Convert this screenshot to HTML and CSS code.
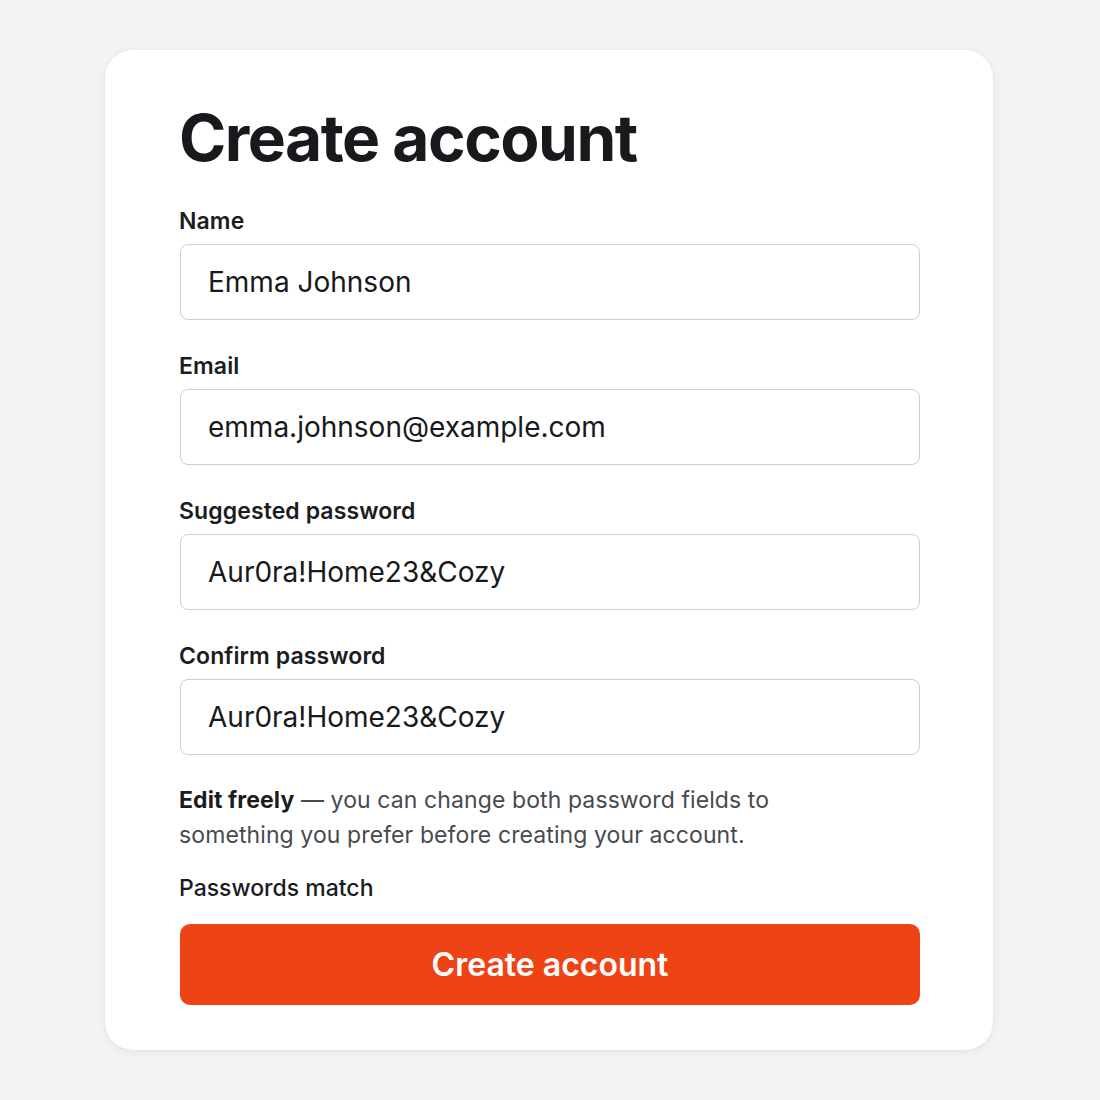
FILE: index.html
```html
<!DOCTYPE html>
<html lang="en">
<head>
<meta charset="utf-8">
<title>Create account</title>
<link rel="stylesheet" href="styles.css">
</head>
<body>
<main class="card">
  <h1 class="title">Create account</h1>
  <form class="form">
    <div class="field">
      <label class="label" for="name">Name</label>
      <div class="input" id="name">Emma Johnson</div>
    </div>
    <div class="field">
      <label class="label" for="email">Email</label>
      <div class="input" id="email">emma.johnson@example.com</div>
    </div>
    <div class="field">
      <label class="label" for="pw">Suggested password</label>
      <div class="input" id="pw">Aur0ra!Home23&amp;Cozy</div>
    </div>
    <div class="field">
      <label class="label" for="pw2">Confirm password</label>
      <div class="input" id="pw2">Aur0ra!Home23&amp;Cozy</div>
    </div>
    <p class="help"><strong>Edit freely</strong> — you can change both password fields to something you prefer before creating your account.</p>
    <p class="status">Passwords match</p>
    <button type="button" class="btn">Create account</button>
  </form>
</main>
</body>
</html>
```
FILE: styles.css
```css
* { box-sizing: border-box; }
html, body { margin: 0; padding: 0; }
body {
  background: #f3f3f3;
  font-family: Inter, "Noto Sans", sans-serif;
  color: #1a1c1f;
  height: 1100px;
}
.card {
  width: 888px;
  height: 1000px;
  margin: 50px 0 0 105px;
  background: #fff;
  border-radius: 28px;
  box-shadow: 0 2px 10px rgba(0,0,0,0.06), 0 0 2px rgba(0,0,0,0.05);
  padding: 50px 73px 45px 75px;
}
.title {
  margin: 0 0 0 -1px;
  font-size: 64px;
  line-height: 76px;
  font-weight: 700;
  letter-spacing: -1.5px;
  color: #17191c;
}
.form {
  margin-top: 32px;
  display: flex;
  flex-direction: column;
}
.field {
  display: flex;
  flex-direction: column;
  gap: 10px;
  margin-bottom: 33px;
}
.field:nth-child(4) { margin-bottom: 28px; }
.label {
  font-size: 23px;
  line-height: 26px;
  font-weight: 600;
  letter-spacing: 0.1px;
  color: #1b1d20;
  margin-left: -1px;
}
.input {
  height: 76px;
  border: 1.5px solid #cfcfcf;
  border-radius: 8px;
  display: flex;
  align-items: center;
  padding-left: 27px;
  font-size: 28px;
  color: #17191c;
}
.help {
  margin: 0 0 0 -1px;
  max-width: 620px;
  font-size: 23px;
  line-height: 35px;
  letter-spacing: 0.1px;
  color: #474a4e;
}
.help strong { color: #1a1c1f; font-weight: 700; }
.status {
  margin: 20px 0 0 -1px;
  font-size: 23px;
  line-height: 30px;
  font-weight: 500;
  color: #1a1c1f;
}
.btn {
  margin-top: 21px;
  height: 81px;
  border: none;
  border-radius: 10px;
  background: #ee4415;
  color: #fff;
  font-family: inherit;
  font-size: 32px;
  font-weight: 600;
  cursor: pointer;
}
```
